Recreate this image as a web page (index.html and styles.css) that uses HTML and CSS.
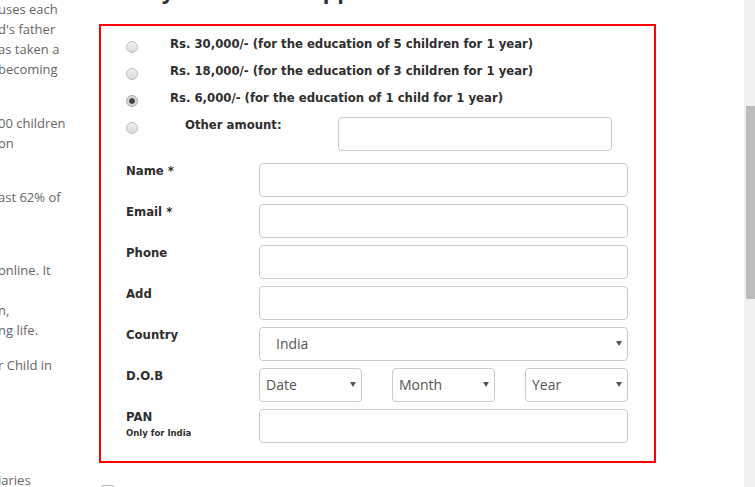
FILE: index.html
```html
<!DOCTYPE html>
<html>
<head>
<meta charset="utf-8">
<link rel="stylesheet" href="styles.css">
</head>
<body>
<div class="page">
  <div class="side">
    <p class="para p1"><span class="ln">uses each</span><span class="ln">d's father</span><span class="ln">as taken a</span><span class="ln">becoming</span></p>
    <p class="para p2"><span class="ln">00 children</span><span class="ln">on</span></p>
    <p class="para p3"><span class="ln">ast 62% of</span><span class="ln"></span></p>
    <p class="para p4"><span class="ln">online. It</span><span class="ln"></span><span class="ln">n,</span><span class="ln">ng life.</span></p>
    <p class="para p5"><span class="ln">r Child in</span></p>
    <p class="para p6"><span class="ln">iaries</span></p>
  </div>
  <div class="main">
    <h2 class="title">Pay Online to Support</h2>
    <form class="box">
      <label class="amt"><input class="radio" type="radio" name="amt"><span class="amt-text">Rs. 30,000/- (for the education of 5 children for 1 year)</span></label>
      <label class="amt"><input class="radio" type="radio" name="amt"><span class="amt-text">Rs. 18,000/- (for the education of 3 children for 1 year)</span></label>
      <label class="amt"><input class="radio" type="radio" name="amt" checked><span class="amt-text">Rs. 6,000/- (for the education of 1 child for 1 year)</span></label>
      <div class="amt other"><input class="radio" type="radio" name="amt"><span class="other-label">Other amount:</span><input class="field other-field" type="text"></div>

      <div class="fields">
        <div class="row"><label class="lbl">Name *</label><input class="field" type="text"></div>
        <div class="row"><label class="lbl">Email *</label><input class="field" type="text"></div>
        <div class="row"><label class="lbl">Phone</label><input class="field" type="text"></div>
        <div class="row"><label class="lbl">Add</label><input class="field" type="text"></div>
        <div class="row"><label class="lbl">Country</label><div class="select wide"><span class="sel-text">India</span><i class="arrow"></i></div></div>
        <div class="row"><label class="lbl">D.O.B</label>
          <div class="dob">
            <div class="select small"><span class="sel-text">Date</span><i class="arrow"></i></div>
            <div class="select small"><span class="sel-text">Month</span><i class="arrow"></i></div>
            <div class="select small"><span class="sel-text">Year</span><i class="arrow"></i></div>
          </div>
        </div>
        <div class="row"><label class="lbl">PAN<span class="note">Only for India</span></label><input class="field" type="text"></div>
      </div>
    </form>
    <div class="after"><span class="check"></span></div>
  </div>
</div>
<div class="scrollbar"><div class="thumb"></div></div>
</body>
</html>
```
FILE: styles.css
```css
html, body {
  margin: 0;
  padding: 0;
  width: 755px;
  height: 487px;
  overflow: hidden;
  background: #fff;
}
.page {
  display: flex;
  align-items: flex-start;
}
.side {
  width: 99px;
  flex: none;
  overflow: hidden;
  font-family: "Open Sans", sans-serif;
  font-size: 13px;
  line-height: 20px;
  color: #666;
}
.para { margin: 0; }
.ln {
  display: block;
  height: 20px;
  white-space: nowrap;
  margin-left: -2px;
}
.p1 { margin-top: -1px; }
.p2 { margin-top: 34px; }
.p3 { margin-top: 34px; }
.p4 { margin-top: 33px; }
.p5 { margin-top: 15px; }
.p6 { margin-top: 95px; }

.main {
  width: 557px;
  flex: none;
}
.title {
  margin: -23px 0 0 33px;
  height: 28px;
  font-family: "Liberation Sans", Arial, sans-serif;
  font-weight: bold;
  font-size: 24px;
  line-height: 28px;
  color: #333;
  white-space: nowrap;
}
.box {
  margin: 19px 0 0 0;
  border: 2px solid #f00;
  padding: 10px 0 18px 25px;
  font-family: "DejaVu Sans", sans-serif;
  font-weight: bold;
  font-size: 11.7px;
  color: #2e2e2e;
}
.amt {
  display: flex;
  align-items: flex-start;
  height: 27px;
  line-height: 16px;
}
.radio {
  appearance: none;
  -webkit-appearance: none;
  margin: 5px 0 0 0;
  width: 12px;
  height: 12px;
  border: 1px solid #bdbdbd;
  border-radius: 50%;
  background: linear-gradient(#f2f2f2, #dadada);
  box-sizing: border-box;
  flex: none;
  position: relative;
}
.radio:checked {
  border-color: #a8a8a8;
  background: radial-gradient(circle, #3c3c3c 0, #3c3c3c 2.2px, #8a8a8a 2.8px, #d4d4d4 3.6px, #e6e6e6 100%);
}
.amt-text {
  margin-left: 32px;
  white-space: nowrap;
}
.other {
  height: 34px;
}
.other-label {
  margin-left: 47px;
  width: 153px;
  white-space: nowrap;
}
.field {
  display: block;
  margin: 0;
  width: 369px;
  height: 34px;
  box-sizing: border-box;
  border: 1px solid #cbcbcb;
  border-radius: 4px;
  background: #fff;
  padding: 0 6px;
  font-family: "Open Sans", sans-serif;
  font-size: 14px;
}
.other-field {
  width: 274px;
}
.fields {
  margin-top: 12px;
  display: flex;
  flex-direction: column;
  gap: 7px;
}
.row {
  display: flex;
  align-items: flex-start;
  height: 34px;
}
.lbl {
  width: 133px;
  flex: none;
  line-height: 16px;
  white-space: nowrap;
}
.note {
  display: block;
  margin-top: 2px;
  font-size: 8.5px;
  line-height: 12px;
}
.select {
  position: relative;
  height: 34px;
  box-sizing: border-box;
  border: 1px solid #cbcbcb;
  border-radius: 4px;
  font-family: "Open Sans", sans-serif;
  font-weight: normal;
  font-size: 14px;
  line-height: 32px;
  color: #555;
}
.select.wide {
  width: 369px;
  padding-left: 16px;
}
.select.small {
  width: 103px;
  padding-left: 6px;
}
.dob {
  width: 369px;
  display: flex;
  justify-content: space-between;
}
.arrow {
  position: absolute;
  right: 5px;
  top: 13px;
  width: 0;
  height: 0;
  border-left: 3px solid transparent;
  border-right: 3px solid transparent;
  border-top: 5px solid #555;
}
.after {
  margin-top: 22px;
  padding-left: 2px;
}
.check {
  display: block;
  width: 11px;
  height: 11px;
  border: 1px solid #b5b5b5;
  border-radius: 2px;
}
.scrollbar {
  position: fixed;
  top: 0;
  right: 0;
  width: 11px;
  height: 487px;
  background: #f1f1f1;
}
.thumb {
  position: absolute;
  top: 106px;
  left: 2px;
  right: 0;
  height: 193px;
  background: #bcbcbc;
}
```
